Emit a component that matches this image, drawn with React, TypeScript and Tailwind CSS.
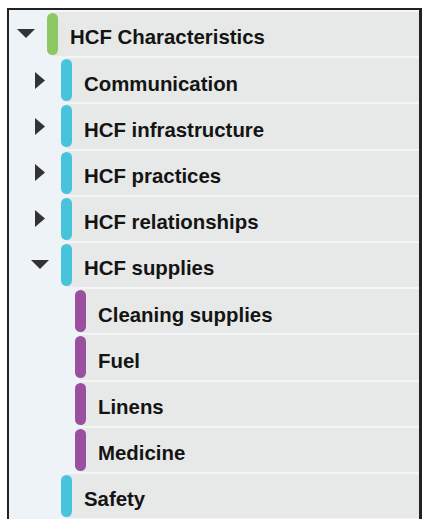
import React from "react";

type Node = {
  label: string;
  level: number;
  toggle?: "open" | "closed";
  color: string;
};

const nodes: Node[] = [
  { label: "HCF Characteristics", level: 0, toggle: "open", color: "bg-[#8dc865]" },
  { label: "Communication", level: 1, toggle: "closed", color: "bg-[#47c3dc]" },
  { label: "HCF infrastructure", level: 1, toggle: "closed", color: "bg-[#47c3dc]" },
  { label: "HCF practices", level: 1, toggle: "closed", color: "bg-[#47c3dc]" },
  { label: "HCF relationships", level: 1, toggle: "closed", color: "bg-[#47c3dc]" },
  { label: "HCF supplies", level: 1, toggle: "open", color: "bg-[#47c3dc]" },
  { label: "Cleaning supplies", level: 2, color: "bg-[#9a4f9f]" },
  { label: "Fuel", level: 2, color: "bg-[#9a4f9f]" },
  { label: "Linens", level: 2, color: "bg-[#9a4f9f]" },
  { label: "Medicine", level: 2, color: "bg-[#9a4f9f]" },
  { label: "Safety", level: 1, color: "bg-[#47c3dc]" },
];

function Toggle({ state }: { state?: "open" | "closed" }) {
  if (state === "open") {
    return (
      <svg width="18" height="10" viewBox="0 0 18 10">
        <polygon points="0,0 18,0 9,9" fill="#333333" />
      </svg>
    );
  }
  if (state === "closed") {
    return (
      <svg width="10" height="17" viewBox="0 0 10 17">
        <polygon points="0,0 10,8.5 0,17" fill="#333333" />
      </svg>
    );
  }
  return null;
}

function Row({ node }: { node: Node }) {
  const indent = node.level === 0 ? "w-0" : node.level === 1 ? "w-[14px]" : "w-[28px]";
  return (
    <div className="flex h-[46.2px] items-stretch">
      <div className={`${indent} shrink-0`} />
      <div className="flex w-[32px] shrink-0 items-center justify-center pt-[2px]">
        <Toggle state={node.toggle} />
      </div>
      <div className="ml-[5px] flex flex-1 flex-col">
        <div className="h-[2px] bg-[linear-gradient(to_right,transparent_5px,#f3f5f6_5px)]" />
        <div className="flex flex-1 items-center bg-[linear-gradient(to_right,transparent_5px,#e7e9e8_5px)]">
          <div className={`h-[42px] w-[11px] shrink-0 rounded-full ${node.color}`} />
          <span className="ml-[12px] mt-[7px] text-[20.4px] font-bold leading-none text-[#141414]">{node.label}</span>
        </div>
      </div>
    </div>
  );
}

export default function App() {
  return (
    <div className="h-[519px] w-[422px] overflow-hidden bg-white pl-[7px] pt-[8px] [font-family:'Liberation_Sans',Arial,sans-serif]">
      <div className="h-full border-l-2 border-r-[3px] border-t-2 border-[#222222] bg-[#eef3f8] pl-px">
        {nodes.map((n) => (
          <Row key={n.label} node={n} />
        ))}
      </div>
    </div>
  );
}
